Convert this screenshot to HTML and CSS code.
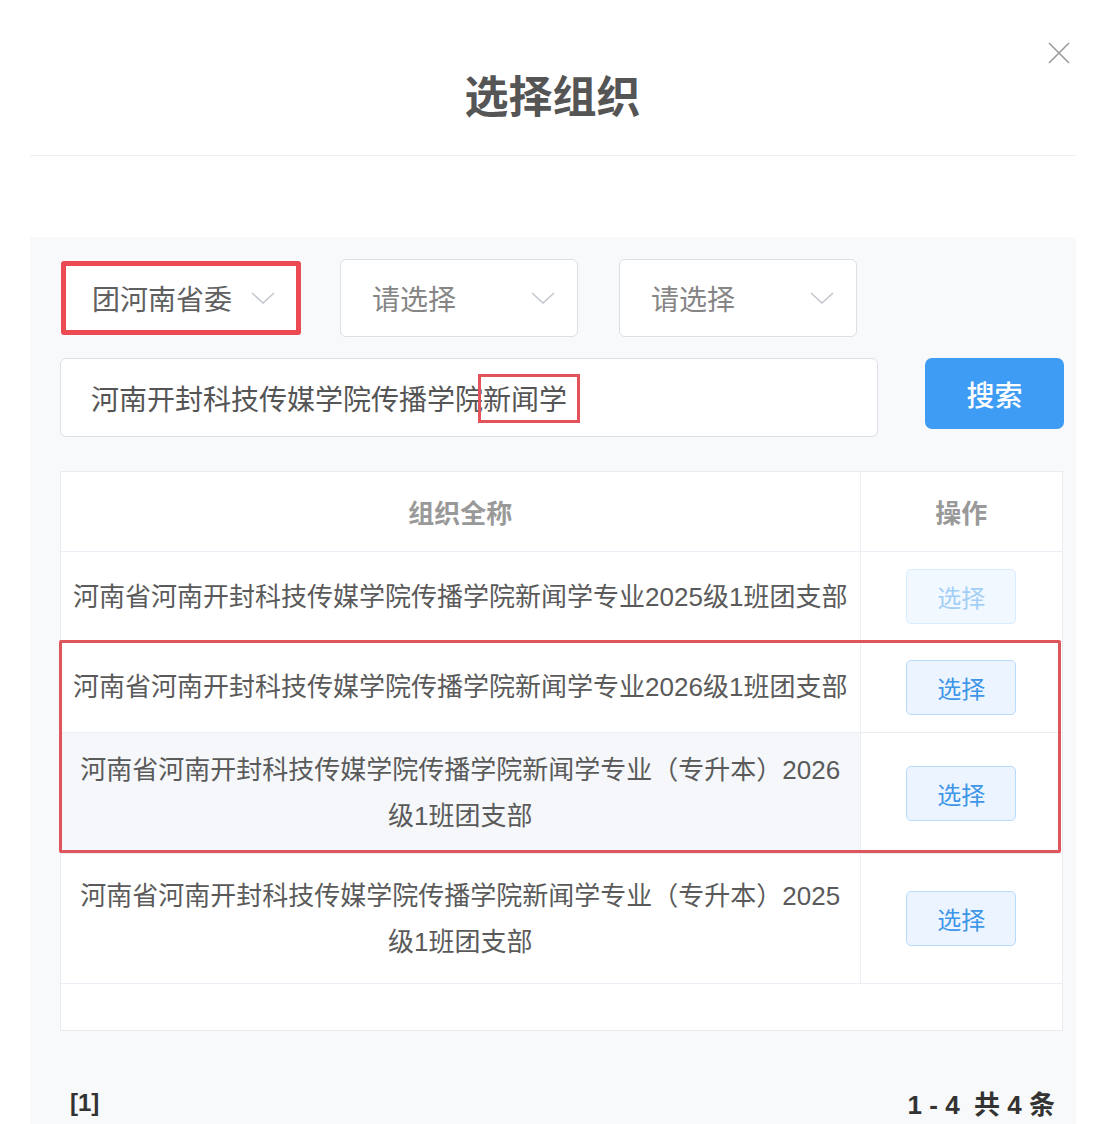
FILE: index.html
```html
<!DOCTYPE html>
<html lang="zh-CN">
<head>
<meta charset="utf-8">
<title>选择组织</title>
<link rel="stylesheet" href="styles.css">
</head>
<body>
<div class="dialog">
  <div class="header">
    <h1 class="title">选择组织</h1>
    <button class="close" aria-label="关闭">
      <svg width="24" height="24" viewBox="0 0 24 24"><path d="M2 2 L22 22 M22 2 L2 22" stroke="#9a9a9a" stroke-width="1.6" fill="none"/></svg>
    </button>
  </div>

  <div class="panel">
    <div class="filters">
      <div class="select marked">
        <span class="value">团河南省委</span>
        <svg class="chev" width="24" height="12" viewBox="0 0 24 12"><polyline points="1,1 12,11 23,1" fill="none" stroke="#c0c4cc" stroke-width="1.4"/></svg>
      </div>
      <div class="select">
        <span class="placeholder">请选择</span>
        <svg class="chev" width="24" height="12" viewBox="0 0 24 12"><polyline points="1,1 12,11 23,1" fill="none" stroke="#c0c4cc" stroke-width="1.4"/></svg>
      </div>
      <div class="select">
        <span class="placeholder">请选择</span>
        <svg class="chev" width="24" height="12" viewBox="0 0 24 12"><polyline points="1,1 12,11 23,1" fill="none" stroke="#c0c4cc" stroke-width="1.4"/></svg>
      </div>
    </div>

    <div class="search-row">
      <div class="input">河南开封科技传媒学院传播学院<span class="hl">新闻学</span></div>
      <button class="btn-search">搜索</button>
    </div>

    <div class="table-wrap">
      <table class="grid">
        <colgroup><col class="c-name"><col class="c-op"></colgroup>
        <thead>
          <tr><th>组织全称</th><th>操作</th></tr>
        </thead>
        <tbody>
          <tr class="r1">
            <td>河南省河南开封科技传媒学院传播学院新闻学专业2025级1班团支部</td>
            <td class="op"><button class="btn-pick disabled">选择</button></td>
          </tr>
          <tr class="r2">
            <td>河南省河南开封科技传媒学院传播学院新闻学专业2026级1班团支部</td>
            <td class="op"><button class="btn-pick">选择</button></td>
          </tr>
          <tr class="r3 hover">
            <td>河南省河南开封科技传媒学院传播学院新闻学专业（专升本）2026级1班团支部</td>
            <td class="op"><button class="btn-pick">选择</button></td>
          </tr>
          <tr class="r4">
            <td>河南省河南开封科技传媒学院传播学院新闻学专业（专升本）2025级1班团支部</td>
            <td class="op"><button class="btn-pick">选择</button></td>
          </tr>
        </tbody>
      </table>
      <div class="mark-rows"></div>
    </div>

    <div class="footer">
      <span class="pages">[1]</span>
      <span class="count">1 - 4&nbsp;&nbsp;共 4 条</span>
    </div>
  </div>
</div>
</body>
</html>
```

FILE: styles.css
```css
html, body {
  margin: 0;
  padding: 0;
  background: #ffffff;
}

body {
  font-family: "Liberation Sans", "Noto Sans CJK SC", sans-serif;
  color: #5a5a5a;
}

.dialog {
  width: 1104px;
  min-height: 1124px;
  display: flex;
  flex-direction: column;
}

.header {
  position: relative;
  margin: 0 29px 0 30px;
  padding: 68px 0 35px;
  border-bottom: 1px solid #efefef;
  text-align: center;
}

.title {
  margin: 0;
  font-size: 44px;
  line-height: 52px;
  font-weight: 700;
  color: #555555;
  font-family: "Noto Sans CJK SC", sans-serif;
}

.close {
  position: absolute;
  top: 41px;
  right: 4px;
  width: 24px;
  height: 24px;
  padding: 0;
  border: 0;
  background: none;
}

.close svg {
  display: block;
}

.panel {
  flex: 1;
  margin: 81px 28px 0 30px;
  padding: 22px 12px 20px 30px;
  background: #f8f9fa;
}

.filters {
  display: flex;
  align-items: center;
  gap: 41px;
}

.select {
  box-sizing: border-box;
  width: 238px;
  height: 78px;
  padding: 0 22px 0 31px;
  display: flex;
  align-items: center;
  justify-content: space-between;
  background: #ffffff;
  border: 1px solid #dcdfe6;
  border-radius: 6px;
  font-size: 28px;
}

.select.marked {
  width: 240px;
  height: 74px;
  margin-left: 1px;
  margin-right: -2px;
  padding-left: 26px;
  padding-right: 21px;
  border: 5px solid #ec4a52;
  border-radius: 3px;
}

.value {
  color: #606060;
}

.placeholder {
  color: #858585;
}

.chev {
  display: block;
}

.search-row {
  margin-top: 21px;
  display: flex;
  align-items: flex-start;
  gap: 47px;
}

.input {
  box-sizing: border-box;
  width: 818px;
  height: 79px;
  padding: 0 30px;
  display: flex;
  align-items: center;
  background: #ffffff;
  border: 1px solid #dcdfe6;
  border-radius: 6px;
  font-size: 28px;
  color: #555555;
  white-space: nowrap;
}

.hl {
  position: relative;
}

.hl::after {
  content: "";
  position: absolute;
  left: -5px;
  right: -13px;
  top: -4px;
  bottom: -5px;
  border: 3px solid #e5535a;
}

.btn-search {
  width: 139px;
  height: 71px;
  border: 0;
  border-radius: 7px;
  background: #3f9cf4;
  color: #ffffff;
  font-size: 28px;
  font-family: "Noto Sans CJK SC", sans-serif;
  font-weight: 500;
}

.table-wrap {
  position: relative;
  box-sizing: border-box;
  width: 1003px;
  margin-top: 34px;
  padding-bottom: 46px;
  background: #ffffff;
  border: 1px solid #e9ebef;
}

.grid {
  width: 100%;
  table-layout: fixed;
  border-collapse: collapse;
}

.c-name {
  width: 799px;
}

.grid th,
.grid td {
  padding: 0 10px;
  text-align: center;
  vertical-align: middle;
  border-bottom: 1px solid #ebeef5;
}

.grid th + th,
.grid td + td {
  border-left: 1px solid #ebeef5;
}

.grid th {
  height: 79px;
  font-size: 26px;
  font-weight: 700;
  color: #999999;
  font-family: "Noto Sans CJK SC", sans-serif;
}

.grid td {
  font-size: 26px;
  line-height: 46px;
  color: #5a5a5a;
}

.r1 td { height: 89px; }
.r2 td { height: 90px; }
.r3 td { height: 120px; }
.r4 td { height: 129px; }

.hover td:first-child {
  background: #f5f7fa;
}

.btn-pick {
  box-sizing: border-box;
  width: 110px;
  height: 55px;
  padding: 0;
  border: 1px solid #b8dafc;
  border-radius: 5px;
  background: #ecf5ff;
  color: #3f95e8;
  font-size: 24px;
  font-family: "Noto Sans CJK SC", sans-serif;
  vertical-align: middle;
}

.btn-pick.disabled {
  border-color: #d9ecff;
  background: #f1f8ff;
  color: #a3cff7;
}

.mark-rows {
  position: absolute;
  left: -2px;
  top: 168px;
  width: 1002px;
  height: 213px;
  box-sizing: border-box;
  border: 3px solid #df555c;
  border-radius: 2px;
  pointer-events: none;
}

.footer {
  margin-top: 53px;
  padding: 0 9px 0 10px;
  display: flex;
  justify-content: space-between;
  align-items: center;
  font-weight: 700;
  color: #333333;
}

.pages {
  font-size: 24px;
}

.count {
  font-size: 26px;
}
```
